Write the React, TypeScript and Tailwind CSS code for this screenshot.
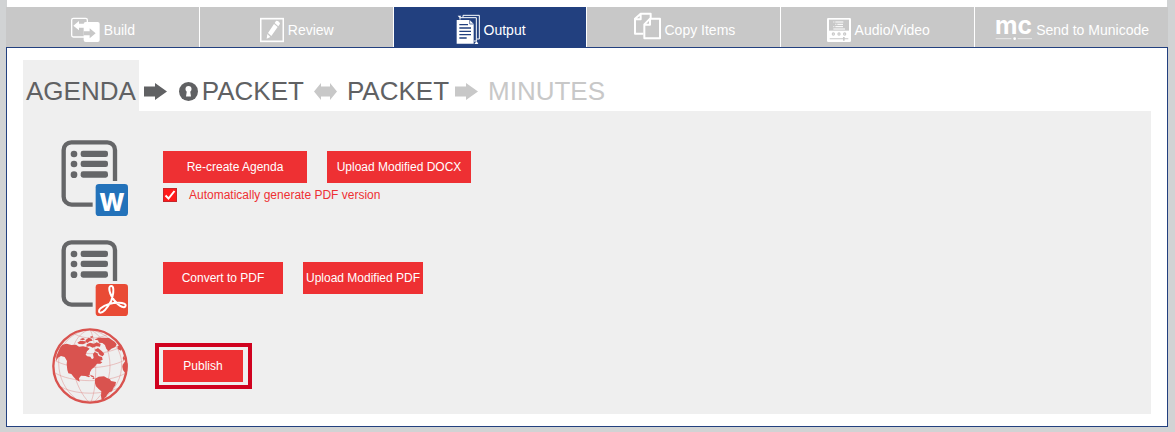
import React, { useState } from 'react'

type ButtonProps = {
  children: React.ReactNode
  className: string
}

const tabs = [
  { name: 'Build', icon: <BuildIcon /> },
  { name: 'Review', icon: <ReviewIcon /> },
  { name: 'Output', icon: <OutputIcon /> },
  { name: 'Copy Items', icon: <CopyIcon /> },
  { name: 'Audio/Video', icon: <MediaIcon /> },
  { name: 'Send to Municode', icon: <MunicodeIcon /> },
]

function BuildIcon() {
  return (
    <svg viewBox="213 36 87 108" className="w-[29px] h-9 shrink-0" aria-hidden="true">
      <rect x="215" y="55" width="47" height="56" rx="5" fill="none" stroke="#fff" strokeWidth="4" />
      <rect x="251" y="66" width="48" height="60" rx="6" fill="#fff" />
      <path d="M220 77l17-14v8h21v12h-21v8z" fill="#fff" />
      <path d="M287 100l-18-15v9h-18v12h18v9z" fill="#c8c8c8" />
    </svg>
  )
}

function ReviewIcon() {
  return (
    <svg viewBox="783 36 72 108" className="w-6 h-9 shrink-0" aria-hidden="true">
      <rect x="785" y="56" width="68" height="68" fill="none" stroke="#fff" strokeWidth="5" />
      <path d="M803 116l2-14 9 9zM807 99l18-27 11 9-19 27zM827 69l4-6q3-2 7 1l4 4q2 3 0 5l-4 6z" fill="#fff" />
    </svg>
  )
}

function OutputIcon() {
  return (
    <svg viewBox="195 36 72 108" className="w-6 h-9 shrink-0" aria-hidden="true">
      <path d="M216 52v-6h49v71h-7M207 59v-6h49v70h-7" fill="none" stroke="#fff" strokeWidth="3" />
      <path d="M197 60h39l12 12v59h-51z" fill="#fff" />
      <path d="M236 60v12h12" fill="none" stroke="#22407f" strokeWidth="2" />
      <path d="M205 74h26M205 84h35M205 94h35M205 104h35M205 114h22" stroke="#22407f" strokeWidth="4" />
      <path d="M200 47h11l-5 7zM250 132h12l-5-9z" fill="#fff" />
    </svg>
  )
}

function CopyIcon() {
  return (
    <svg viewBox="723 36 81 108" className="w-[27px] h-9 shrink-0" aria-hidden="true">
      <g fill="none" stroke="#fff" strokeWidth="6" strokeLinejoin="round">
        <path d="M751 101h-25V56l17-15h30v16M743 41v17h-17" />
        <path d="M771 56h30v59h-47V73zM771 56v18h-17" />
      </g>
    </svg>
  )
}

function MediaIcon() {
  return (
    <svg viewBox="132 36 72 108" className="w-6 h-9 shrink-0" aria-hidden="true">
      <rect x="132" y="54" width="72" height="72" rx="4" fill="#fff" />
      <rect x="138" y="59" width="60" height="33" fill="#c8c8c8" />
      <path d="M157 66h24M151 66h3M163 73h17M157 73h3M157 80h23M151 80h3M151 87h35" stroke="#fff" strokeWidth="3" />
      <g fill="#c8c8c8">
        <circle cx="151" cy="102" r="5" />
        <circle cx="168" cy="102" r="5" />
        <circle cx="185" cy="102" r="5" />
        <path d="M140 115h40v-4h5v4h11v3h-11v4h-5v-4h-40z" />
      </g>
      <g fill="#fff">
        <circle cx="151" cy="102" r="1.5" />
        <circle cx="168" cy="102" r="1.5" />
        <circle cx="185" cy="102" r="1.5" />
      </g>
    </svg>
  )
}

function MunicodeIcon() {
  return (
    <svg viewBox="636 36 111 108" className="w-[37px] h-9 shrink-0 overflow-visible" aria-hidden="true">
      <text x="691.5" y="103" textAnchor="middle" fill="#fff" fontSize="74" className="font-['Inter',sans-serif] font-bold">mc</text>
      <path d="M638 116h47M704 116h43" stroke="#fff" strokeOpacity="0.6" strokeWidth="3" />
      <circle cx="695" cy="116" r="4" fill="#fff" />
    </svg>
  )
}

function ArrowIcon() {
  return (
    <svg viewBox="0 0 23 17" className="w-[23px] h-[17px] shrink-0" fill="currentColor" aria-hidden="true">
      <path d="M0 3.5h11V0l12 8.5L11 17v-3.5H0z" />
    </svg>
  )
}

function DoubleArrowIcon() {
  return (
    <svg viewBox="0 0 23 17" className="w-[23px] h-[17px] shrink-0" fill="currentColor" aria-hidden="true">
      <path d="M0 8.5L7 0v3.5h9V0l7 8.5L16 17v-3.5H7V17z" />
    </svg>
  )
}

function LockIcon() {
  return (
    <svg viewBox="0 0 19 19" className="w-[19px] h-[19px] shrink-0" aria-hidden="true">
      <circle cx="9.5" cy="9.5" r="9.5" fill="#606163" />
      <circle cx="9.5" cy="7" r="3" fill="#fff" />
      <path d="M8 8h3l1 6.500H7z" fill="#fff" />
    </svg>
  )
}

function DocumentIcon({ children }: { children: React.ReactNode }) {
  return (
    <svg viewBox="36 30 228 228" className="size-[76px] shrink-0" aria-hidden="true">
      <path d="M225 153V60a23 23 0 0 0-23-23H94a23 23 0 0 0-23 23v140a24 24 0 0 0 24 24h63" fill="none" stroke="#656668" strokeWidth="13" />
      <g fill="#656668">
        <circle cx="102" cy="72" r="10" />
        <circle cx="102" cy="102" r="10" />
        <circle cx="102" cy="134" r="10" />
        <rect x="122" y="62" width="82" height="19" rx="7" />
        <rect x="122" y="92" width="82" height="19" rx="7" />
        <rect x="122" y="124" width="82" height="19" rx="7" />
      </g>
      {children}
    </svg>
  )
}

function WordIcon() {
  return (
    <DocumentIcon>
      <rect x="167" y="162" width="97" height="96" rx="10" fill="#2372ba" />
      <text x="215.5" y="242" textAnchor="middle" fill="#fff" fontSize="72" className="font-['Inter',sans-serif] font-extrabold">W</text>
    </DocumentIcon>
  )
}

function PdfIcon() {
  return (
    <DocumentIcon>
      <rect x="167" y="162" width="97" height="96" rx="10" fill="#e94b35" />
      <path
        d="M214 212C219 196 222 181 219 172c-2-6-10-5-11 1-2 13 10 36 24 48 9 8 20 14 24 8 4-7-7-11-19-11-20 0-43 7-55 17-7 6-6 13-1 13 9 0 24-20 33-36z"
        fill="none"
        stroke="#fff"
        strokeWidth="6"
        strokeLinejoin="round"
      />
    </DocumentIcon>
  )
}

function GlobeIcon() {
  return (
    <svg viewBox="36 24 228 228" className="size-[76px] shrink-0" aria-hidden="true">
      <g fill="none" stroke="#d9534f" strokeWidth="1.5" opacity="0.6">
        <path d="M150 28C105 42 85 95 100 150c8 40 25 75 48 98" />
        <path d="M150 28C95 35 55 75 56 130c1 45 20 80 50 105" />
        <path d="M150 28c15 28 18 80 17 130-1 40-6 70-15 90" />
        <path d="M150 28c40 22 60 62 60 110 0 45-20 85-50 110" />
        <path d="M150 28c60 15 92 55 95 100 2 45-20 85-60 110" />
        <path d="M104 42c28 16 70 16 97 2M62 80c48 28 130 28 182 0M42 120c50 30 155 32 217-2M42 157c50 32 160 34 216 2M54 195c45 32 140 32 192 4M84 228c35 20 95 20 132 2" />
      </g>
      <g fill="#d9534f">
        <path d="M60 83l7-9 13-3 14 4 14-1 9 6 12-1 13 3 7 4-8 8-4 10 5 5 9 1 5 8 5-4-2-12 5-6 8 4 4 8 10 3 2 8-8 4 7 4-6 4-10 0-7 9-9 8-5 9-1 9-12 2-14-1-6 8 2 10-10-6-8-8-7-9-9-2-3-10-2-17 1-10-7-12-11-3-9 5-6 11 1-16z" />
        <path d="M112 68l9-6 14 2 3 5-9 4-12-1zM119 58l10-4 7 4-8 3zM137 60l9-7 8 3 4 6-9 2-7 5-6-4zM150 50l7-2 3 4-7 2zM140 73l10-5 12 3 8-4 12 5-2 8-11-1-11 4-9-4-10 1z" />
        <path d="M164 89l10-5 12 10 7 8-5 7-9-4-4-8-8-3z" />
        <path d="M163 59l12-6 18 0 14 1 17 11 6 8-4 8-12 5-8 8-7-8-4-11-8-6-10-1-3-7z" />
        <path d="M232 79l7-4 6 8-2 9-9-4zM251 108l5 8-5 6-3-8zM248 134l10-14 5 12-1 22-6 6-7-10-2-10z" />
        <path d="M135 166l8-1 7 4-3 3-9-3zM150 164l10 4 3 4-9-2zM157 174l5-2 2 4-5 1z" />
        <path d="M165 176l11-6 16-1 9 5 9 4 3 5 15 3-2 10-6 8-4 10-8 3-7 8-3 6-5 3-3 9-5-3-2-12 1-14-8-7-8-8-3-9z" />
      </g>
      <circle cx="150" cy="138" r="110" fill="none" stroke="#d9534f" strokeWidth="7" />
    </svg>
  )
}

function ActionButton({ children, className }: ButtonProps) {
  return (
    <button type="button" className={`h-8 bg-[#ee3033] text-xs text-white whitespace-nowrap hover:bg-red-700 ${className}`}>
      {children}
    </button>
  )
}

export default function App() {
  const [active, setActive] = useState('Output')

  return (
    <div className="min-h-screen bg-[#d1d3d4] pl-1.5 pr-[7px] pb-[5px] font-['Liberation_Sans',Arial,sans-serif]">
      <div className="mx-px h-[7px] bg-white" />
      <nav className="grid grid-cols-6 gap-px bg-white">
        {tabs.map((tab) => (
          <button
            key={tab.name}
            type="button"
            onClick={() => setActive(tab.name)}
            className={`flex h-10 items-center justify-center gap-1 pt-1.5 pl-px text-sm text-white whitespace-nowrap ${
              active === tab.name ? 'bg-[#22407f]' : 'bg-[#c8c8c8]'
            }`}
          >
            {tab.icon}
            {tab.name}
          </button>
        ))}
      </nav>

      <main className="border border-[#22407f] bg-white px-4 pt-3 pb-3">
        <div className="flex items-stretch text-[26px] leading-[39px] text-[#606163]">
          <button type="button" className="bg-[#efefef] px-[3px] pt-3">AGENDA</button>
          <span className="flex items-center pt-3 pl-[5px] pr-3"><ArrowIcon /></span>
          <button type="button" className="flex items-center gap-1 pt-3">
            <LockIcon />
            PACKET
          </button>
          <span className="flex items-center px-2.5 pt-3 text-[#c8c8c8]"><DoubleArrowIcon /></span>
          <button type="button" className="pt-3">PACKET</button>
          <span className="flex items-center pl-1.5 pr-2.5 pt-3 text-[#c8c8c8]"><ArrowIcon /></span>
          <button type="button" className="pt-3 text-[#c8c8c8]">MINUTES</button>
        </div>

        <section className="bg-[#efefef] pt-[29px] pr-4 pb-2.5 pl-[29px]">
          <div className="mb-6 flex items-center gap-[35px]">
            <WordIcon />
            <div>
              <div className="flex gap-5">
                <ActionButton className="w-36">Re-create Agenda</ActionButton>
                <ActionButton className="w-36">Upload Modified DOCX</ActionButton>
              </div>
              <label className="flex h-[22px] items-center gap-3 pt-0.5 text-xs text-[#ee3033]">
                <span className="relative size-3.5">
                  <input type="checkbox" defaultChecked className="peer block size-3.5 appearance-none border border-[#c4262b] checked:bg-[#ff1a1a]" />
                  <svg viewBox="0 0 14 14" className="pointer-events-none absolute inset-0 size-3.5 opacity-0 peer-checked:opacity-100" aria-hidden="true">
                    <path d="M2.500 7.500l3 3L11.500 3" fill="none" stroke="#fff" strokeWidth="2" />
                  </svg>
                </span>
                Automatically generate PDF version
              </label>
            </div>
          </div>

          <div className="mb-3 flex items-center gap-[35px]">
            <PdfIcon />
            <div className="flex gap-5">
              <ActionButton className="w-[120px]">Convert to PDF</ActionButton>
              <ActionButton className="w-[120px]">Upload Modified PDF</ActionButton>
            </div>
          </div>

          <div className="flex items-center gap-[27px]">
            <GlobeIcon />
            <div className="flex border-4 border-[#d0021f] py-[3px] pr-[5px] pl-1">
              <ActionButton className="w-20">Publish</ActionButton>
            </div>
          </div>
        </section>
      </main>
    </div>
  )
}
